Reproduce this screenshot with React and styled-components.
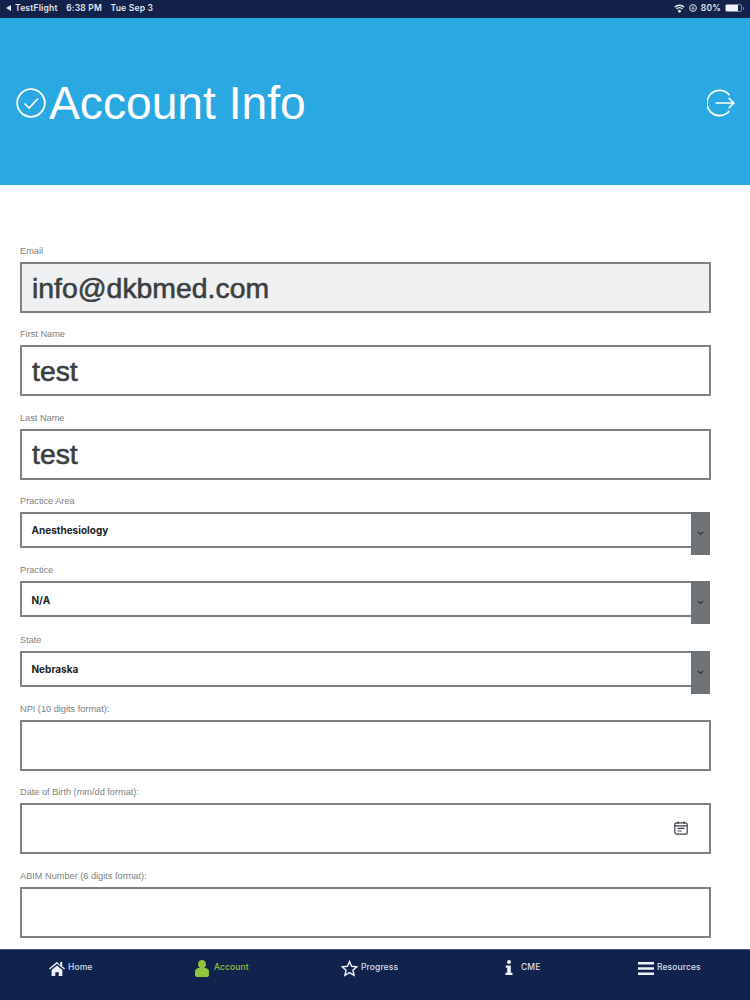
import React from "react";
import styled, { createGlobalStyle } from "styled-components";

const Global = createGlobalStyle`
  html, body { margin: 0; padding: 0; background: #fff; }
  * { box-sizing: border-box; }
  body { font-family: "Liberation Sans", Arial, sans-serif; }
`;

const Page = styled.div`
  width: 750px; height: 1000px; display: flex; flex-direction: column; overflow: hidden; background: #fff;
`;
const StatusBar = styled.div`
  height: 18px; flex: none; background: #12224a; color: #e4e8f0; display: flex; align-items: center;
  justify-content: space-between; padding: 0 5px 2px 6px;
  font: 600 8.5px "Inter", sans-serif; letter-spacing: 0.2px;
`;
const StatusGroup = styled.div`
  display: flex; align-items: center; gap: ${p => p.$gap || 8}px;
`;
const Back = styled.span`
  display: inline-block; width: 0; height: 0; border-style: solid; border-width: 3.5px 5px 3.5px 0;
  border-color: transparent #e4e8f0 transparent transparent; margin-right: -3px;
`;
const Battery = styled.span`
  display: inline-block; width: 17px; height: 8px; margin-right: 3px; border: 1px solid #7d879e; border-radius: 2px;
  position: relative; background: linear-gradient(to right, #f2f4f8 78%, transparent 78%);
  &::after {
    content: ""; position: absolute; right: -3px; top: 1.5px; width: 1.5px; height: 3px;
    background: #7d879e; border-radius: 0 1px 1px 0;
  }
`;
const Header = styled.header`
  height: 167px; flex: none; background: #2aa8e2; color: #fff; display: flex; align-items: center;
  justify-content: space-between; padding: 3px 15px 0 16px;
`;
const TitleWrap = styled.div`
  display: flex; align-items: center; gap: 3px;
`;
const Title = styled.h1`
  margin: 0; font: 400 46.2px/1 "Liberation Sans", Arial, sans-serif; color: #fff;
`;
const Form = styled.form`
  flex: 1; padding: 58px 39px 0 20px; display: flex; flex-direction: column; min-height: 0;
`;
const Field = styled.div`
  display: flex; flex-direction: column; margin-bottom: ${p => p.$select ? 14.4 : 13.3}px;
`;
const Label = styled.label`
  font: 400 9.2px/16px "Liberation Sans", Arial, sans-serif; color: #7e8081; height: 16px; margin-bottom: 3px;
`;
const TextBox = styled.div`
  height: 51px; border: 2.5px solid #7f8283; background: ${p => p.$disabled ? "#eff0f1" : "#fff"};
  display: flex; align-items: center; padding: 1px 21px 0 10px;
  font: 400 28.4px/1 "Liberation Sans", Arial, sans-serif; color: #3c3f42;
  -webkit-text-stroke: 0.6px #3c3f42;
`;
const DateIcon = styled.svg`
  margin-left: auto; margin-top: -3px; flex: none;
`;
const SelectRow = styled.div`
  position: relative; height: 36px; margin-right: 1px; border: 2.5px solid #7f8283; border-right-width: 0; background: #fff;
  display: flex; align-items: center; padding: 1px 0 0 9.5px;
  font: 700 10px/1 "Inter", sans-serif; color: #222426;
`;
const Arrow = styled.span`
  position: absolute; right: 0; top: -2px; width: 19px; height: 43px; background: #6d7376;
  display: flex; align-items: center; justify-content: center;
`;
const TabBar = styled.nav`
  height: 51px; flex: none; background: #11234d; display: grid;
  grid-template-columns: 148px 146px 155px 134px 167px; border-top: 1px solid #4a5b85;
`;
const Tab = styled.a`
  display: flex; align-items: flex-start; gap: ${p => p.$gap ?? 3}px; padding: 9px 0 0 ${p => p.$pad}px;
  font: 500 8.5px/16px "Inter", sans-serif; color: ${p => p.$active ? "#8fc53d" : "#d9deea"};
  letter-spacing: 0.1px;
`;
const TabIcon = styled.svg`
  flex: none; display: block; margin-top: ${p => p.$top}px;
`;

const Chevron = () => (
  <svg width="7" height="5" viewBox="0 0 7 5" fill="none" stroke="#33383c" strokeWidth="1.2"><path d="M1 1l2.5 2.5L6 1" /></svg>
);

const fields = [
  { label: "Email", value: "info@dkbmed.com", disabled: true },
  { label: "First Name", value: "test" },
  { label: "Last Name", value: "test" },
  { label: "Practice Area", value: "Anesthesiology", select: true },
  { label: "Practice", value: "N/A", select: true },
  { label: "State", value: "Nebraska", select: true },
  { label: "NPI (10 digits format):", value: "" },
  { label: "Date of Birth (mm/dd format):", value: "", date: true },
  { label: "ABIM Number (6 digits format):", value: "" },
];

export default function App() {
  return (
    <Page>
      <Global />
      <StatusBar>
        <StatusGroup $gap={8.5}>
          <StatusGroup $gap={7}><Back /><span>TestFlight</span></StatusGroup>
          <span>6:38 PM</span>
          <span>Tue Sep 3</span>
        </StatusGroup>
        <StatusGroup $gap={4}>
          <svg width="11" height="9" viewBox="0 0 11 9" fill="none" stroke="#e4e8f0" strokeWidth="1.3">
            <path d="M.8 3.2a6.6 6.6 0 0 1 9.4 0M2.5 5a4.1 4.1 0 0 1 6 0" /><circle cx="5.5" cy="7.2" r=".8" fill="#e4e8f0" />
          </svg>
          <svg width="8" height="8" viewBox="0 0 8 8" fill="none" stroke="#dfe3ec" strokeWidth="1">
            <circle cx="4" cy="4" r="3.4" /><path d="M4 2v2.6M2.6 4.2L4 5.6l1.4-1.4" />
          </svg>
          <span>80%</span>
          <Battery />
        </StatusGroup>
      </StatusBar>
      <Header>
        <TitleWrap>
          <svg width="30" height="30" viewBox="0 0 30 30" fill="none" stroke="#fff" strokeWidth="1.8">
            <circle cx="15" cy="15" r="13.8" /><path d="M8.5 15.5l4.6 4.6L22 10.5" strokeWidth="1.6" />
          </svg>
          <Title>Account Info</Title>
        </TitleWrap>
        <svg width="28" height="28" viewBox="0 0 28 28" fill="none" stroke="#fff" strokeWidth="1.7">
          <path d="M22.5 6.2A12.6 12.6 0 1 0 22.5 21.8" /><path d="M8.5 14H27M21.8 9l5 5-5 5" />
        </svg>
      </Header>
      <Form>
        {fields.map(f => (
          <Field key={f.label} $select={f.select}>
            <Label>{f.label}</Label>
            {f.select ? (
              <SelectRow>{f.value}<Arrow><Chevron /></Arrow></SelectRow>
            ) : (
              <TextBox $disabled={f.disabled}>
                {f.value}
                {f.date && (
                  <DateIcon width="14" height="14" viewBox="0 0 14 14" fill="none" stroke="#3b4045" strokeWidth="1.2">
                    <rect x=".8" y="1.8" width="12.4" height="11.4" rx="2" /><path d="M1 4.8h12M4 .5v2.4M10 .5v2.4M3.5 7.3h7M3.5 10h4" />
                  </DateIcon>
                )}
              </TextBox>
            )}
          </Field>
        ))}
      </Form>
      <TabBar>
        <Tab $pad={49}>
          <TabIcon $top={2} width="16" height="15" viewBox="0 0 16 15" fill="#eef1f6">
            <path d="M8 .8L0 7.6l.8 1L8 2.7l7.200 5.900.8-1-2.800-2.400V1h-2v3.500zM2.600 9L8 4.500 13.400 9v6H9.700v-3.800H6.300V15H2.600z" />
          </TabIcon>
          <span>Home</span>
        </Tab>
        <Tab $pad={47} $gap={5} $active>
          <TabIcon $top={1} width="14" height="17" viewBox="0 0 14 17" fill="#8fc53d">
            <ellipse cx="7" cy="4.3" rx="4" ry="4.3" /><path d="M0 15v-3.500C0 9.200 2 8 4 8h6c2 0 4 1.200 4 3.500V15c0 1.200-1 2-2 2H2c-1 0-2-.8-2-2z" />
          </TabIcon>
          <span>Account</span>
        </Tab>
        <Tab $pad={47}>
          <TabIcon $top={1} width="17" height="17" viewBox="0 0 17 17" fill="none" stroke="#eef1f6" strokeWidth="1.4">
            <path d="M8.5 1.5l2.100 4.800 5.200.5-3.900 3.400 1.200 5.100-4.600-2.700-4.600 2.700 1.200-5.100L1.200 6.800l5.200-.5z" />
          </TabIcon>
          <span>Progress</span>
        </Tab>
        <Tab $pad={56} $gap={8}>
          <TabIcon $top={1} width="8" height="15" viewBox="0 0 8 15" fill="#eef1f6">
            <circle cx="4" cy="2" r="2" /><path d="M.8 5.500h5v7.200H7.500V15H.5v-2.300h1.700V7.800H.8z" />
          </TabIcon>
          <span>CME</span>
        </Tab>
        <Tab $pad={55} $gap={3}>
          <TabIcon $top={3} width="16" height="13" viewBox="0 0 16 13" fill="#eef1f6">
            <path d="M0 0h16v2.600H0zM0 5.200h16v2.600H0zM0 10.400h16V13H0z" />
          </TabIcon>
          <span>Resources</span>
        </Tab>
      </TabBar>
    </Page>
  );
}
